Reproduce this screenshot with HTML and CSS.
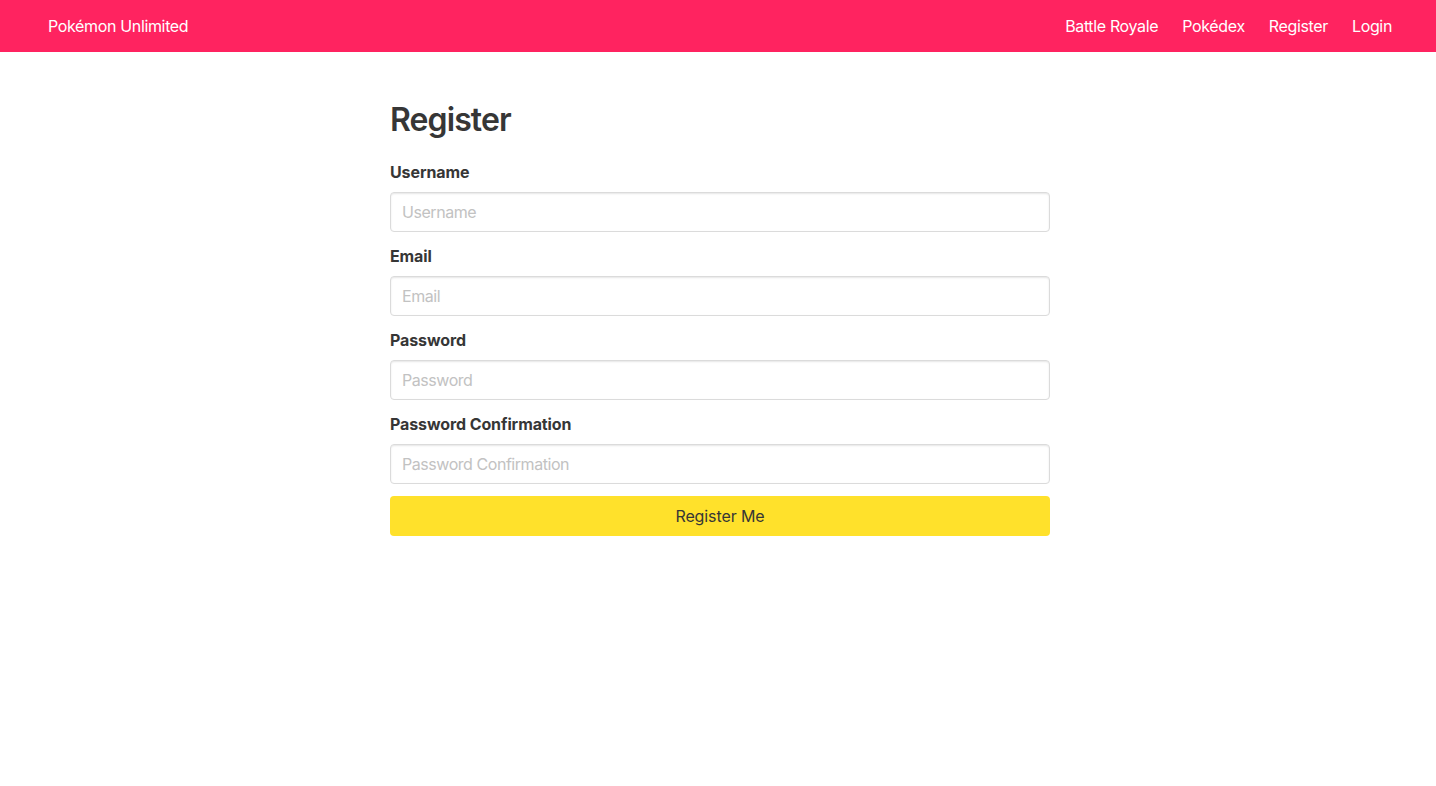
FILE: index.html
```html
<!DOCTYPE html>
<html lang="en">
<head>
<meta charset="utf-8">
<title>Pokémon Unlimited</title>
<link rel="stylesheet" href="styles.css">
</head>
<body>
<nav class="navbar">
  <a class="brand" href="#">Pokémon Unlimited</a>
  <div class="nav-end">
    <a class="nav-item" href="#">Battle Royale</a>
    <a class="nav-item" href="#">Pokédex</a>
    <a class="nav-item" href="#">Register</a>
    <a class="nav-item" href="#">Login</a>
  </div>
</nav>
<section class="section">
  <form class="form">
    <h1 class="title">Register</h1>
    <div class="field">
      <label class="label">Username</label>
      <input class="input" type="text" placeholder="Username">
    </div>
    <div class="field">
      <label class="label">Email</label>
      <input class="input" type="email" placeholder="Email">
    </div>
    <div class="field">
      <label class="label">Password</label>
      <input class="input" type="password" placeholder="Password">
    </div>
    <div class="field">
      <label class="label">Password Confirmation</label>
      <input class="input" type="password" placeholder="Password Confirmation">
    </div>
    <button class="button" type="button">Register Me</button>
  </form>
</section>
</body>
</html>
```
FILE: styles.css
```css
* { box-sizing: border-box; }
html, body { margin: 0; padding: 0; }
body {
  font-family: Inter, "Noto Sans", sans-serif;
  font-size: 16px;
  line-height: 1.5;
  color: #4a4a4a;
  background: #fff;
}
.navbar {
  height: 52px;
  background: #ff2360;
  display: flex;
  align-items: center;
  justify-content: space-between;
  padding: 0 32px 0 48px;
}
.brand, .nav-item {
  color: #fff;
  text-decoration: none;
  font-size: 16px;
  letter-spacing: -0.35px;
}
.nav-end { display: flex; }
.nav-item { padding: 0 12px; }
.section { padding: 48px 22px 48px 26px; }
.form {
  width: 660px;
  margin: 0 auto;
  display: flex;
  flex-direction: column;
}
.title {
  margin: 2px 0 22px;
  font-size: 32px;
  font-weight: 600;
  line-height: 36px;
  color: #363636;
  letter-spacing: -0.9px;
}
.field { display: flex; flex-direction: column; margin-bottom: 12px; }
.label {
  font-weight: 700;
  color: #363636;
  margin-bottom: 8px;
  line-height: 24px;
  letter-spacing: -0.1px;
}
.input {
  height: 40px;
  border: 1px solid #dbdbdb;
  border-radius: 4px;
  padding: 0 11px;
  font-family: inherit;
  font-size: 16px;
  color: #363636;
  letter-spacing: -0.45px;
  box-shadow: inset 0 1px 2px rgba(10,10,10,0.1);
}
.input::placeholder { color: #c2c2c2; }
.button {
  height: 40px;
  border: none;
  border-radius: 4px;
  background: #ffe12b;
  color: #363636;
  font-family: inherit;
  font-size: 16px;
  letter-spacing: -0.1px;
  cursor: pointer;
}
```
